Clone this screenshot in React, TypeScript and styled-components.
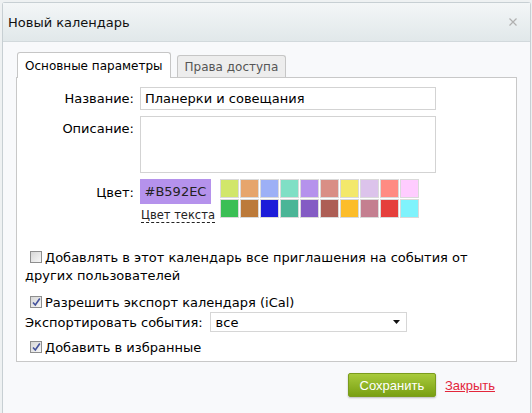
import styled, { createGlobalStyle } from "styled-components";

const GlobalStyle = createGlobalStyle`
  html, body {
    margin: 0;
    padding: 0;
    height: 100%;
  }
  body {
    background: #eef1f2;
    font-family: "DejaVu Sans", Verdana, sans-serif;
    font-size: 13px;
    color: #000;
  }
  #root {
    height: 100%;
  }
`;

const Dialog = styled.div`
  box-sizing: border-box;
  margin: 2px 1px 0 2px;
  height: calc(100% - 2px);
  background: #f8f9fb;
  border: 1px solid #c7cfd3;
  border-bottom: none;
  border-radius: 3px 3px 0 0;
  display: flex;
  flex-direction: column;
`;

const Header = styled.div`
  height: 38px;
  display: flex;
  align-items: center;
  justify-content: space-between;
  padding: 0 13px 0 5px;
  background: linear-gradient(#f3f6f7, #e1e8ea);
  border-bottom: 1px solid #d2d9dc;
`;

const Title = styled.div`
  font-size: 13px;
  color: #111;
`;

const CloseX = styled.svg`
  width: 8px;
  height: 8px;
  stroke: #b0b0b0;
  stroke-width: 1.2;
`;

const Body = styled.div`
  flex: 1;
  padding: 10px 13px 0 13px;
`;

const TabBar = styled.div`
  display: flex;
  align-items: flex-end;
  gap: 6px;
  padding-left: 1px;
  margin-bottom: -1px;
  position: relative;
`;

const Tab = styled.div<{ $active?: boolean }>`
  box-sizing: border-box;
  height: ${(p) => (p.$active ? "26px" : "22px")};
  margin-bottom: ${(p) => (p.$active ? "0" : "1px")};
  padding: 0 7px;
  display: flex;
  align-items: center;
  font-size: 12px;
  border: 1px solid #c6c6c6;
  border-bottom: none;
  border-radius: 3px 3px 0 0;
  background: ${(p) => (p.$active ? "#fff" : "#ededed")};
  color: ${(p) => (p.$active ? "#000" : "#555")};
`;

const Panel = styled.div`
  background: #fff;
  border: 1px solid #c8c8c8;
  padding: 9px 0 4px 0;
`;

const FormGrid = styled.div`
  display: grid;
  grid-template-columns: 117px 296px;
  column-gap: 6px;
  row-gap: 6px;
`;

const Label = styled.div<{ $top?: boolean }>`
  text-align: right;
  align-self: ${(p) => (p.$top ? "start" : "center")};
  padding-top: ${(p) => (p.$top ? "5px" : "0")};
`;

const TextInput = styled.input`
  box-sizing: border-box;
  height: 23px;
  width: 296px;
  border: 1px solid #d3d3d3;
  padding: 0 4px;
  font: inherit;
  color: #000;
  outline: none;
`;

const TextArea = styled.textarea`
  box-sizing: border-box;
  height: 57px;
  width: 296px;
  border: 1px solid #d3d3d3;
  padding: 4px;
  font: inherit;
  resize: none;
  outline: none;
`;

const ColorRow = styled.div`
  display: flex;
  align-items: flex-start;
  gap: 9px;
`;

const ColorPick = styled.div`
  display: flex;
  flex-direction: column;
  align-items: flex-start;
  width: 71px;
`;

const ColorBox = styled.div<{ $color: string }>`
  width: 71px;
  height: 25px;
  display: flex;
  align-items: center;
  justify-content: center;
  background: ${(p) => p.$color};
  color: #222;
`;

const TextColorLink = styled.span`
  margin: 4px 0 0 1px;
  font-size: 11.5px;
  color: #222;
  line-height: 14px;
  white-space: nowrap;
  border-bottom: 1px dashed #222;
`;

const Swatches = styled.div`
  display: grid;
  grid-template-columns: repeat(10, 19px);
  grid-auto-rows: 19px;
  gap: 1px;
`;

const Swatch = styled.div<{ $color: string }>`
  box-sizing: border-box;
  border: 1px solid #dadada;
  background: ${(p) => p.$color};
`;

const Options = styled.div`
  margin-top: 26px;
  padding-left: 8px;
  display: flex;
  flex-direction: column;
`;

const Option = styled.div<{ $gap?: number }>`
  line-height: 18px;
  margin-top: ${(p) => p.$gap ?? 0}px;
`;

const Check = styled.span`
  display: inline-block;
  box-sizing: border-box;
  width: 12px;
  height: 12px;
  margin: 0 3px 0 5px;
  vertical-align: -1px;
  border: 1px solid #8e8e8e;
  background: linear-gradient(135deg, #d6d6d6, #f7f7f7);
  position: relative;
  svg {
    position: absolute;
    left: 1px;
    top: 0px;
  }
`;

const ExportRow = styled.div`
  display: flex;
  align-items: center;
  gap: 7px;
`;

const FakeSelect = styled.div`
  box-sizing: border-box;
  width: 197px;
  height: 20px;
  border: 1px solid #d6d6d6;
  background: #fff;
  display: flex;
  align-items: center;
  justify-content: space-between;
  padding: 0 6px 0 5px;
`;

const Footer = styled.div`
  display: flex;
  justify-content: flex-end;
  align-items: center;
  gap: 9px;
  padding: 11px 22px 0 0;
`;

const SaveButton = styled.button`
  width: 88px;
  height: 24px;
  border: 1px solid #7b9c1d;
  border-radius: 2px;
  background: linear-gradient(#a8ca3c, #79a012);
  box-shadow: 0 1px 2px rgba(0, 0, 0, 0.25);
  color: #fff;
  font-family: "Liberation Sans", Arial, sans-serif;
  font-size: 13px;
  padding: 0;
`;

const CloseLink = styled.a`
  font-family: "Liberation Sans", Arial, sans-serif;
  font-size: 13px;
  color: #e3263b;
  text-decoration: underline;
`;

const topColors = ["#d1e66a", "#e6a56c", "#9db0f6", "#80dfc5", "#b592ec", "#d98e85", "#f3e86b", "#dcc3eb", "#ff8b82", "#ffccff"];
const bottomColors = ["#3bbf55", "#bc7a3a", "#1c1cd9", "#4bb597", "#845cc4", "#ad5e55", "#fcbd2a", "#c47f90", "#e53f3c", "#7ff3fc"];

const CheckBox = ({ checked }: { checked?: boolean }) => (
  <Check>
    {checked && (
      <svg width="9" height="10" viewBox="0 0 9 10">
        <path d="M1 5.5 L3.3 8 L7.8 1.5" fill="none" stroke="#44529c" strokeWidth="1.6" />
      </svg>
    )}
  </Check>
);

export default function App() {
  return (
    <>
      <GlobalStyle />
      <Dialog>
        <Header>
          <Title>Новый календарь</Title>
          <CloseX viewBox="0 0 8 8">
            <path d="M0.5 0.5 L7.5 7.5 M7.5 0.5 L0.5 7.5" />
          </CloseX>
        </Header>
        <Body>
          <TabBar>
            <Tab $active>Основные параметры</Tab>
            <Tab>Права доступа</Tab>
          </TabBar>
          <Panel>
            <FormGrid>
              <Label>Название:</Label>
              <TextInput defaultValue="Планерки и совещания" />
              <Label $top>Описание:</Label>
              <TextArea />
              <Label $top>
                <span style={{ position: "relative", top: 1 }}>Цвет:</span>
              </Label>
              <ColorRow>
                <ColorPick>
                  <ColorBox $color="#b592ec">#B592EC</ColorBox>
                  <TextColorLink>Цвет текста</TextColorLink>
                </ColorPick>
                <Swatches>
                  {topColors.concat(bottomColors).map((c) => (
                    <Swatch key={c} $color={c} />
                  ))}
                </Swatches>
              </ColorRow>
            </FormGrid>
            <Options>
              <Option>
                <CheckBox />
                Добавлять в этот календарь все приглашения на события от других пользователей
              </Option>
              <Option $gap={9}>
                <CheckBox checked />
                Разрешить экспорт календаря (iCal)
              </Option>
              <ExportRow>
                <span>Экспортировать события:</span>
                <FakeSelect>
                  <span>все</span>
                  <svg width="7" height="4" viewBox="0 0 7 4">
                    <path d="M0 0 H7 L3.5 4 Z" fill="#111" />
                  </svg>
                </FakeSelect>
              </ExportRow>
              <Option $gap={7}>
                <CheckBox checked />
                Добавить в избранные
              </Option>
            </Options>
          </Panel>
          <Footer>
            <SaveButton>Сохранить</SaveButton>
            <CloseLink href="#">Закрыть</CloseLink>
          </Footer>
        </Body>
      </Dialog>
    </>
  );
}
